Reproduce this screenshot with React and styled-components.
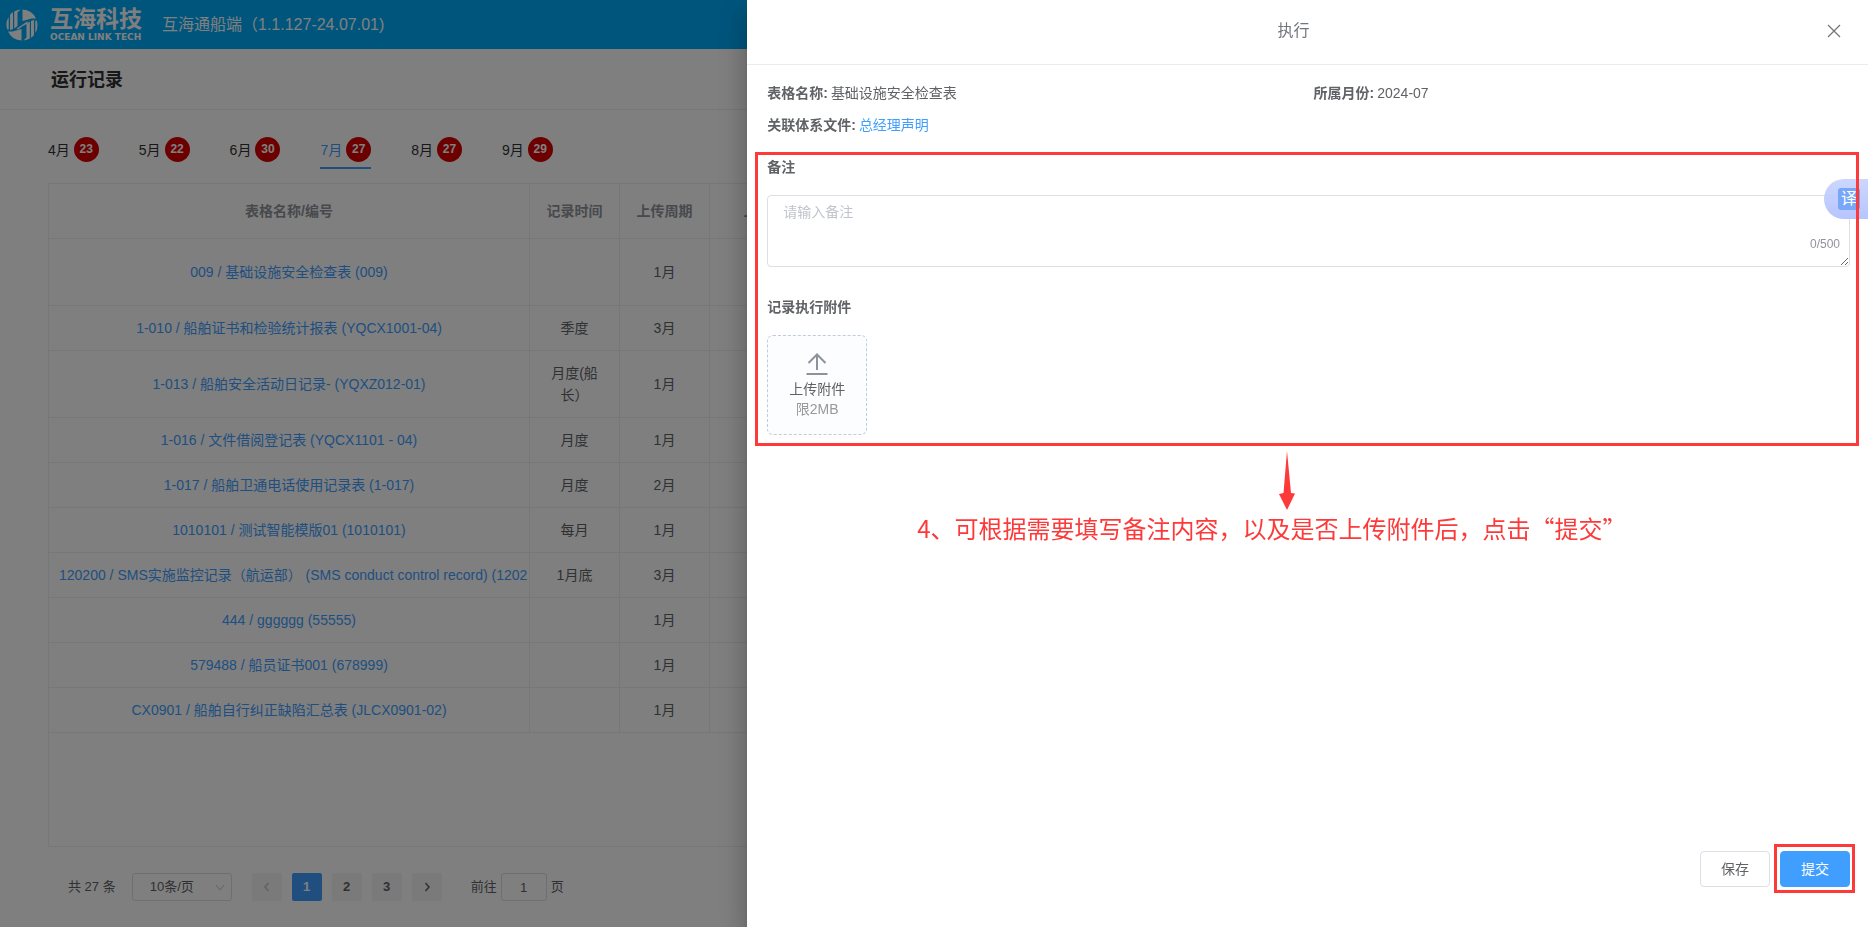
import React from "react";
import styled, { createGlobalStyle } from "styled-components";

const RED = "#fd3939";

const GlobalStyle = createGlobalStyle`
  *, *::before, *::after { box-sizing: border-box; }
  body {
    margin: 0;
    background: #fff;
    color: #606266;
    font-family: "Liberation Sans", "Noto Sans CJK SC", sans-serif;
    font-size: 14px;
    line-height: 22px;
    overflow: hidden;
  }
  button, input, select, textarea { font: inherit; color: inherit; }
  a { color: #409eff; text-decoration: none; }
`;

const Page = styled.div`
  display: flex;
  flex-direction: column;
  height: 100vh;
`;

const TopBar = styled.header`
  display: flex;
  align-items: center;
  flex: none;
  height: 49px;
  padding: 0 6px;
  background: #00aafa;
  color: #fff;
`;

const Brand = styled.div`
  display: flex;
  align-items: center;
  gap: 12px;
  margin-right: 18px;
`;

const BrandText = styled.div`
  display: flex;
  flex-direction: column;
  gap: 5px;
  width: 94px;
  white-space: nowrap;
`;

const BrandName = styled.span`
  font-family: "Noto Sans CJK SC", sans-serif;
  font-size: 23px;
  font-weight: 700;
  line-height: 20px;
`;

const BrandSub = styled.span`
  font-family: "DejaVu Sans", sans-serif;
  font-size: 9px;
  font-weight: 700;
  line-height: 10px;
`;

const AppName = styled.span`
  font-size: 16px;
`;

const TitleBar = styled.div`
  flex: none;
  height: 61px;
  padding: 0 51px;
  border-bottom: 1px solid #ebeef5;
`;

const PageTitle = styled.h1`
  margin: 0;
  color: #303133;
  font-size: 18px;
  line-height: 62px;
`;

const Content = styled.main`
  display: flex;
  flex-direction: column;
  flex: 1;
  min-height: 0;
  padding: 26px 48px;
`;

const Tabs = styled.nav`
  display: flex;
  gap: 40px;
  margin-bottom: 14px;
`;

const Tab = styled.a`
  display: flex;
  align-items: center;
  gap: 4px;
  height: 33px;
  padding-bottom: 4px;
  border-bottom: 2px solid ${(p) => (p.$active ? "#409eff" : "transparent")};
  color: ${(p) => (p.$active ? "#409eff" : "#303133")};
`;

const Count = styled.span`
  width: 25px;
  height: 25px;
  border-radius: 50%;
  background: #d90000;
  color: #fff;
  font-size: 12px;
  font-weight: 700;
  line-height: 25px;
  text-align: center;
`;

const TableFrame = styled.div`
  flex: 1;
  min-height: 0;
  overflow: hidden;
  border: 1px solid #ebeef5;
`;

const Table = styled.table`
  width: 100%;
  table-layout: fixed;
  border-collapse: separate;
  border-spacing: 0;
`;

const Col = styled.col`
  width: ${(p) => p.$width};
`;

const HeadCell = styled.th`
  height: 55px;
  padding: 0 10px;
  border: solid #ebeef5;
  border-width: 0 1px 1px 0;
  color: #909399;
  text-align: center;
`;

const Cell = styled.td`
  height: ${(p) => (p.$tall ? 67 : 45)}px;
  padding: 0 ${(p) => (p.$narrow ? 20 : 10)}px;
  border: solid #ebeef5;
  border-width: 0 1px 1px 0;
  overflow: hidden;
  text-align: center;
`;

const RecordLink = styled.a`
  white-space: nowrap;
`;

const Pager = styled.footer`
  display: flex;
  align-items: center;
  flex: none;
  gap: 10px;
  margin-top: 26px;
  padding-left: 20px;
  font-size: 13px;
`;

const Total = styled.span`
  margin-right: 6px;
`;

const SizeBox = styled.label`
  position: relative;
  display: flex;
  margin-right: 10px;
`;

const SizeSelect = styled.select`
  width: 100px;
  height: 28px;
  padding: 0 17px;
  border: 1px solid #dcdfe6;
  border-radius: 3px;
  background: #fff;
  appearance: none;
`;

const SizeArrow = styled.svg`
  position: absolute;
  top: 9px;
  right: 7px;
  color: #c0c4cc;
  pointer-events: none;
`;

const PageButton = styled.button`
  display: flex;
  align-items: center;
  justify-content: center;
  width: 30px;
  height: 28px;
  padding: 0;
  border: 0;
  border-radius: 2px;
  background: ${(p) => (p.$active ? "#409eff" : "#f4f4f5")};
  color: ${(p) => (p.$active ? "#fff" : p.disabled ? "#c0c4cc" : "#606266")};
  font-weight: 700;
`;

const Jump = styled.label`
  display: flex;
  align-items: center;
  gap: 4px;
  margin-left: 19px;
`;

const JumpInput = styled.input`
  width: 46px;
  height: 28px;
  padding: 0 3px;
  border: 1px solid #dcdfe6;
  border-radius: 3px;
  text-align: center;
`;

const Mask = styled.div`
  position: fixed;
  inset: 0;
  background: rgba(0, 0, 0, 0.5);
`;

const Drawer = styled.aside`
  position: fixed;
  top: 0;
  right: 0;
  bottom: 0;
  display: flex;
  flex-direction: column;
  width: 60%;
  background: #fff;
  box-shadow: 0 8px 10px -5px rgba(0, 0, 0, 0.2), 0 16px 24px 2px rgba(0, 0, 0, 0.14),
    0 6px 30px 5px rgba(0, 0, 0, 0.12);
`;

const DrawerHead = styled.div`
  display: flex;
  align-items: center;
  flex: none;
  height: 65px;
  padding: 0 20px 2px;
  border-bottom: 1px solid #ebebeb;
`;

const DrawerTitle = styled.h2`
  flex: 1;
  margin: 0;
  color: #72767b;
  font-size: 16px;
  font-weight: 400;
  text-align: center;
`;

const CloseButton = styled.button`
  display: flex;
  align-items: center;
  justify-content: center;
  width: 28px;
  height: 28px;
  padding: 0;
  border: 0;
  background: none;
  color: #72767b;
`;

const DrawerBody = styled.div`
  display: flex;
  flex-direction: column;
  flex: 1;
  padding: 17px 18px 40px 20px;
`;

const Facts = styled.div`
  display: grid;
  grid-template-columns: 1fr 1fr;
  gap: 10px;
  margin-bottom: 20px;
`;

const Fact = styled.div`
  display: flex;
  gap: 3px;
`;

const FormPart = styled.section`
  position: relative;
  display: flex;
  flex-direction: column;
`;

const FieldLabel = styled.label`
  margin-bottom: 17px;
  font-weight: 700;
`;

const RemarkBox = styled.div`
  position: relative;
  display: flex;
  margin-bottom: 29px;
`;

const Remark = styled.textarea`
  width: 100%;
  height: 72px;
  padding: 5px 15px;
  border: 1px solid #dcdfe6;
  border-radius: 4px;
  background: #fff;
  resize: vertical;
  outline: none;
  &::placeholder { color: #c0c4cc; }
`;

const Counter = styled.span`
  position: absolute;
  right: 10px;
  bottom: 12px;
  color: #909399;
  font-size: 12px;
`;

const Upload = styled.button`
  display: flex;
  flex-direction: column;
  align-items: center;
  width: 100px;
  height: 100px;
  padding: 16px 0 0;
  border: 1px dashed #c0ccda;
  border-radius: 6px;
  background: #fbfdff;
  line-height: 20px;
`;

const UploadIcon = styled.svg`
  flex: none;
  margin-bottom: 3px;
  color: #8c939d;
`;

const UploadLimit = styled.span`
  color: #999;
`;

const Frame = styled.span`
  position: absolute;
  inset: ${(p) => p.$inset};
  z-index: 2;
  border: 3px solid ${RED};
  pointer-events: none;
`;

const Note = styled.div`
  display: flex;
  flex-direction: column;
  margin: 16px 0 0 150px;
  color: ${RED};
`;

const NoteArrow = styled.svg`
  margin-left: 362px;
`;

const NoteText = styled.p`
  margin: 0;
  font-family: "Noto Sans CJK SC", sans-serif;
  font-size: 24px;
  line-height: 36px;
  white-space: nowrap;
`;

const Actions = styled.div`
  display: flex;
  justify-content: flex-end;
  gap: 10px;
  margin-top: auto;
`;

const Framed = styled.div`
  position: relative;
`;

const ActionButton = styled.button`
  width: 70px;
  height: 36px;
  padding: 0;
  border: 1px solid ${(p) => (p.$primary ? "#409eff" : "#dcdfe6")};
  border-radius: 4px;
  background: ${(p) => (p.$primary ? "#409eff" : "#fff")};
  color: ${(p) => (p.$primary ? "#fff" : "#606266")};
`;

const Translate = styled.button`
  position: absolute;
  top: 179px;
  right: 0;
  z-index: 1;
  width: 44px;
  height: 40px;
  padding: 0 0 0 14px;
  border: 0;
  border-radius: 20px 0 0 20px;
  background: linear-gradient(rgba(200, 212, 254, 0.92), rgba(176, 192, 254, 0.92));
`;

const TranslateGlyph = styled.span`
  display: block;
  width: 22px;
  height: 22px;
  border-radius: 3px;
  background: #78a6f8;
  color: #fff;
  font-size: 16px;
  line-height: 22px;
`;

const months = [
  ["4月", 23],
  ["5月", 22],
  ["6月", 30],
  ["7月", 27],
  ["8月", 27],
  ["9月", 29],
];

const records = [
  { name: "009 / 基础设施安全检查表 (009)", time: "", cycle: "1月", tall: true },
  { name: "1-010 / 船舶证书和检验统计报表 (YQCX1001-04)", time: "季度", cycle: "3月" },
  { name: "1-013 / 船舶安全活动日记录- (YQXZ012-01)", time: "月度(船长）", cycle: "1月", tall: true },
  { name: "1-016 / 文件借阅登记表 (YQCX1101 - 04)", time: "月度", cycle: "1月" },
  { name: "1-017 / 船舶卫通电话使用记录表 (1-017)", time: "月度", cycle: "2月" },
  { name: "1010101 / 测试智能模版01 (1010101)", time: "每月", cycle: "1月" },
  { name: "120200 / SMS实施监控记录（航运部） (SMS conduct control record) (1202", time: "1月底", cycle: "3月" },
  { name: "444 / gggggg (55555)", time: "", cycle: "1月" },
  { name: "579488 / 船员证书001 (678999)", time: "", cycle: "1月" },
  { name: "CX0901 / 船舶自行纠正缺陷汇总表 (JLCX0901-02)", time: "", cycle: "1月" },
];

function Logo() {
  return (
    <svg width="32" height="32" viewBox="0 0 32 32" aria-hidden="true">
      <g fill="#fff">
        <path d="M16.500 0.500A15.500 15.500 0 0 1 30 9.500H25.500L16.500 12Z" />
        <path d="M15.500 31.500A15.500 15.500 0 0 1 2 22.500H6.500L15.500 20Z" />
        <path d="M0.500 16Q0.500 11 2.700 8V20.500H1.300Q0.500 18 0.500 16Z" />
        <path d="M4 6Q5.500 4 7 3.200V20L4 21Z" />
        <path d="M8.200 2.500Q11 1 14.500 0.500L11.500 3.500V17L8.200 19.500Z" />
        <path d="M31.500 16Q31.500 21 29.300 24V11.500H30.700Q31.500 14 31.500 16Z" />
        <path d="M28 26Q26.500 28 25 28.800V12L28 11Z" />
        <path d="M23.800 29.500Q21 31 17.500 31.500L20.500 28.500V15L23.800 12.500Z" />
        <path d="M10.500 19.700L21.500 12.300V14.500L16 17.500L12 20.500Z" />
      </g>
    </svg>
  );
}

function Chevron({ d }) {
  return (
    <svg width="12" height="12" viewBox="0 0 12 12" fill="none" stroke="currentColor" strokeWidth="1.5" aria-hidden="true">
      <path d={d} />
    </svg>
  );
}

export default function App() {
  return (
    <>
      <GlobalStyle />
      <Page>
        <TopBar>
          <Brand>
            <Logo />
            <BrandText>
              <BrandName>互海科技</BrandName>
              <BrandSub>OCEAN LINK TECH</BrandSub>
            </BrandText>
          </Brand>
          <AppName>互海通船端（1.1.127-24.07.01)</AppName>
        </TopBar>
        <TitleBar>
          <PageTitle>运行记录</PageTitle>
        </TitleBar>
        <Content>
          <Tabs>
            {months.map(([label, count]) => (
              <Tab key={label} href="#" $active={label === "7月"}>
                {label}
                <Count>{count}</Count>
              </Tab>
            ))}
          </Tabs>
          <TableFrame>
            <Table>
              <colgroup>
                <Col $width="481px" />
                <Col $width="90px" />
                <Col $width="90px" />
                <Col $width="124px" />
                <Col $width="auto" />
              </colgroup>
              <thead>
                <tr>
                  <HeadCell>表格名称/编号</HeadCell>
                  <HeadCell>记录时间</HeadCell>
                  <HeadCell>上传周期</HeadCell>
                  <HeadCell>上传方式</HeadCell>
                  <HeadCell />
                </tr>
              </thead>
              <tbody>
                {records.map((r) => (
                  <tr key={r.name}>
                    <Cell $tall={r.tall}>
                      <RecordLink href="#">{r.name}</RecordLink>
                    </Cell>
                    <Cell $narrow>{r.time}</Cell>
                    <Cell>{r.cycle}</Cell>
                    <Cell />
                    <Cell />
                  </tr>
                ))}
              </tbody>
            </Table>
          </TableFrame>
          <Pager>
            <Total>共 27 条</Total>
            <SizeBox>
              <SizeSelect aria-label="每页条数" defaultValue="10">
                <option value="10">10条/页</option>
              </SizeSelect>
              <SizeArrow width="10" height="10" viewBox="0 0 10 10" fill="none" stroke="currentColor">
                <path d="M1 3L5 8L9 3" />
              </SizeArrow>
            </SizeBox>
            <PageButton disabled aria-label="上一页">
              <Chevron d="M7.500 2L4 6L7.500 10" />
            </PageButton>
            <PageButton $active>1</PageButton>
            <PageButton>2</PageButton>
            <PageButton>3</PageButton>
            <PageButton aria-label="下一页">
              <Chevron d="M4.500 2L8 6L4.500 10" />
            </PageButton>
            <Jump>
              前往
              <JumpInput defaultValue="1" />
              页
            </Jump>
          </Pager>
        </Content>
      </Page>

      <Mask />

      <Drawer role="dialog" aria-labelledby="drawer-title">
        <DrawerHead>
          <DrawerTitle id="drawer-title">执行</DrawerTitle>
          <CloseButton aria-label="关闭">
            <svg width="14" height="14" viewBox="0 0 14 14" fill="none" stroke="currentColor" strokeWidth="1.300">
              <path d="M1 1L13 13M13 1L1 13" />
            </svg>
          </CloseButton>
        </DrawerHead>
        <DrawerBody>
          <Facts>
            <Fact>
              <b>表格名称:</b>
              <span>基础设施安全检查表</span>
            </Fact>
            <Fact>
              <b>所属月份:</b>
              <span>2024-07</span>
            </Fact>
            <Fact>
              <b>关联体系文件:</b>
              <a href="#">总经理声明</a>
            </Fact>
          </Facts>
          <FormPart>
            <FieldLabel htmlFor="remark">备注</FieldLabel>
            <RemarkBox>
              <Remark id="remark" placeholder="请输入备注" maxLength={500} />
              <Counter>0/500</Counter>
            </RemarkBox>
            <FieldLabel htmlFor="upload">记录执行附件</FieldLabel>
            <Upload id="upload">
              <UploadIcon width="24" height="24" viewBox="0 0 24 24" fill="none" stroke="currentColor" strokeWidth="2">
                <path d="M12 18V3M3.500 11L12 2.500L20.500 11M1.500 22H22.500" />
              </UploadIcon>
              <span>上传附件</span>
              <UploadLimit>限2MB</UploadLimit>
            </Upload>
            <Frame $inset="-4px -9px -11px -12px" />
          </FormPart>
          <Note>
            <NoteArrow width="16" height="59" viewBox="0 0 16 59" fill="currentColor" aria-hidden="true">
              <path d="M8 0L12 42L16 42.500L8 59L0 43L4.500 42Z" />
            </NoteArrow>
            <NoteText>4、可根据需要填写备注内容，以及是否上传附件后，点击“提交”</NoteText>
          </Note>
          <Actions>
            <ActionButton>保存</ActionButton>
            <Framed>
              <ActionButton $primary>提交</ActionButton>
              <Frame $inset="-7px -5px -6px -6px" />
            </Framed>
          </Actions>
        </DrawerBody>
        <Translate>
          <TranslateGlyph>译</TranslateGlyph>
        </Translate>
      </Drawer>
    </>
  );
}
